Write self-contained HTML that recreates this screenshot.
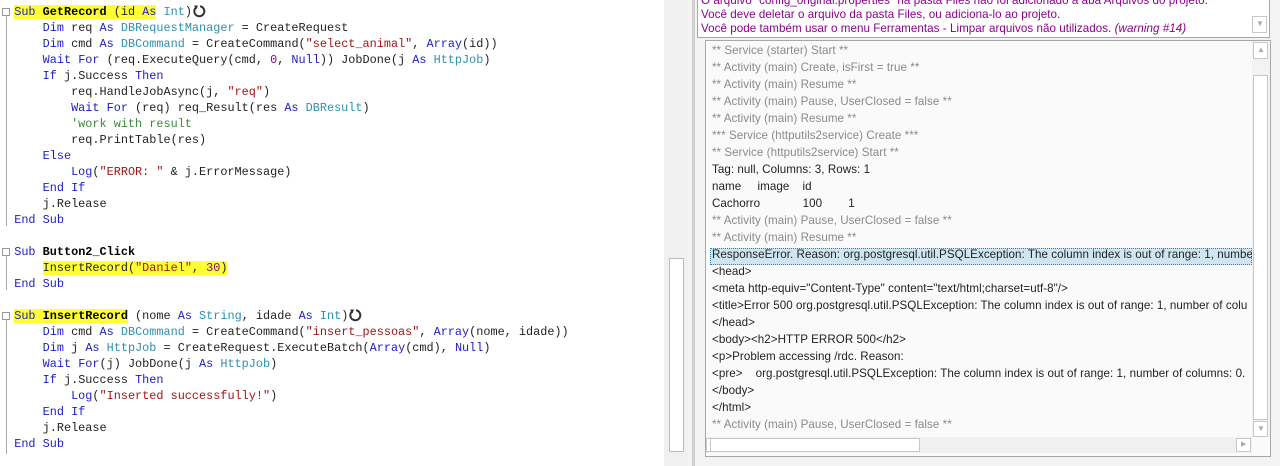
<!DOCTYPE html>
<html><head><meta charset="utf-8"><style>
*{margin:0;padding:0;box-sizing:border-box}
body{width:1280px;height:466px;overflow:hidden;background:#fff;position:relative;font-family:"Liberation Sans",sans-serif}
.code{position:absolute;left:0;top:4px;font-family:"Liberation Mono",monospace;font-size:11.85px;line-height:16px;color:#222}
.code div{height:16px;position:relative;white-space:pre}
.k{color:#1c1cc8}.t{color:#2b91af}.s{color:#a31515}.c{color:#3a8a3a}.n{color:#8b008b}.b{font-weight:bold;color:#000}
.hl{background:#ffff33}
.fold{position:absolute;left:2px;width:8px;height:8px;border:1px solid #999;background:#fff}
.vl{position:absolute;left:6px;border-left:1px solid #aaa}
.ic{display:inline-block;vertical-align:-3px}
.sb{position:absolute;background:#f0f0f0}
.log{position:absolute;left:712px;top:42px;font-size:11.6px;letter-spacing:0.05px;line-height:17px;white-space:pre;color:#222}
.g{color:#8a8a8a}
.arr{position:absolute;border:1px solid #c8c8c8;background:#fff}
</style></head><body>
<div class="sb" style="left:664px;top:0;width:24px;height:466px"></div>
<div style="position:absolute;left:669px;top:258px;width:15px;height:194px;background:#fff;border:1px solid #bbb"></div>
<div style="position:absolute;left:688px;top:0;width:592px;height:466px;background:#f3f3f3"></div>
<div style="position:absolute;left:692px;top:0;width:3px;height:466px;background:#d0d0d0"></div>
<div style="position:absolute;left:697px;top:0;width:573px;height:38px;background:#fff;border:1px solid #a8a8a8;border-top:none;overflow:hidden">
<div style="position:absolute;left:3px;top:-6px;font-size:11.6px;letter-spacing:0.05px;line-height:14px;color:#8b008b;white-space:pre">O arquivo "config_original.properties" na pasta Files não foi adicionado à aba Arquivos do projeto.
Você deve deletar o arquivo da pasta Files, ou adiciona-lo ao projeto.
Você pode também usar o menu Ferramentas - Limpar arquivos não utilizados. <i>(warning #14)</i></div>
<div class="arr" style="left:554px;top:16px;width:15px;height:17px"><span style="position:absolute;left:3px;top:2px;font-size:8px;color:#aaa">▼</span></div>
</div>
<div style="position:absolute;left:705px;top:40px;width:566px;height:417px;background:#fafafa;border:1px solid #a8a8a8"></div>
<div style="position:absolute;left:710px;top:248px;width:542px;height:17px;background:#cfe6f2;border:1px dotted #3a7ca8"></div>
<div class="log"><span class="g">** Service (starter) Start **
** Activity (main) Create, isFirst = true **
** Activity (main) Resume **
** Activity (main) Pause, UserClosed = false **
** Activity (main) Resume **
*** Service (httputils2service) Create ***
** Service (httputils2service) Start **</span>
Tag: null, Columns: 3, Rows: 1
name     image    id
Cachorro             100        1
<span class="g">** Activity (main) Pause, UserClosed = false **
** Activity (main) Resume **</span>
ResponseError. Reason: org.postgresql.util.PSQLException: The column index is out of range: 1, numbe
&lt;head&gt;
&lt;meta http-equiv="Content-Type" content="text/html;charset=utf-8"/&gt;
&lt;title&gt;Error 500 org.postgresql.util.PSQLException: The column index is out of range: 1, number of colu
&lt;/head&gt;
&lt;body&gt;&lt;h2&gt;HTTP ERROR 500&lt;/h2&gt;
&lt;p&gt;Problem accessing /rdc. Reason:
&lt;pre&gt;    org.postgresql.util.PSQLException: The column index is out of range: 1, number of columns: 0.
&lt;/body&gt;
&lt;/html&gt;
<span class="g">** Activity (main) Pause, UserClosed = false **</span></div>
<div style="position:absolute;left:1252px;top:41px;width:18px;height:396px;background:#f3f3f3"></div>
<div class="arr" style="left:1253px;top:42px;width:15px;height:17px"><span style="position:absolute;left:3px;top:2px;font-size:8px;color:#aaa">▲</span></div>
<div class="arr" style="left:1253px;top:75px;width:15px;height:345px"></div>
<div class="arr" style="left:1253px;top:421px;width:15px;height:16px"><span style="position:absolute;left:3px;top:2px;font-size:8px;color:#aaa">▼</span></div>
<div style="position:absolute;left:706px;top:437px;width:546px;height:16px;background:#f0f0f0"></div>
<div class="arr" style="left:706px;top:438px;width:12px;height:14px"><span style="position:absolute;left:2px;top:1px;font-size:7px;color:#aaa">◀</span></div>
<div class="arr" style="left:710px;top:438px;width:210px;height:14px"></div>
<div class="arr" style="left:1236px;top:438px;width:15px;height:14px"><span style="position:absolute;left:4px;top:1px;font-size:7px;color:#aaa">▶</span></div>

<div class="vl" style="top:14px;height:212px"></div>
<div class="vl" style="top:254px;height:36px"></div>
<div class="vl" style="top:318px;height:136px"></div>
<div class="fold" style="top:8px"></div>
<div class="fold" style="top:248px"></div>
<div class="fold" style="top:312px"></div>
<div class="code"><div>  <span class="hl"><span class="k">Sub</span> <span class="b">GetRecord</span> (id <span class="k">As</span></span> <span class="t">Int</span>)<svg class="ic" width="14" height="14" viewBox="0 0 14 14"><path d="M4 3.5A5 5 0 1 0 8 2.3" fill="none" stroke="#333" stroke-width="2"/><path d="M2 1.5L6 1.5L4.5 5.5Z" fill="#333"/></svg></div><div>      <span class="k">Dim</span> req <span class="k">As</span> <span class="t">DBRequestManager</span> = CreateRequest</div><div>      <span class="k">Dim</span> cmd <span class="k">As</span> <span class="t">DBCommand</span> = CreateCommand(<span class="s">"select_animal"</span>, <span class="k">Array</span>(id))</div><div>      <span class="k">Wait For</span> (req.ExecuteQuery(cmd, <span class="n">0</span>, <span class="k">Null</span>)) JobDone(j <span class="k">As</span> <span class="t">HttpJob</span>)</div><div>      <span class="k">If</span> j.Success <span class="k">Then</span></div><div>          req.HandleJobAsync(j, <span class="s">"req"</span>)</div><div>          <span class="k">Wait For</span> (req) req_Result(res <span class="k">As</span> <span class="t">DBResult</span>)</div><div>          <span class="c">'work with result</span></div><div>          req.PrintTable(res)</div><div>      <span class="k">Else</span></div><div>          <span class="k">Log</span>(<span class="s">"ERROR: "</span> &amp; j.ErrorMessage)</div><div>      <span class="k">End If</span></div><div>      j.Release</div><div>  <span class="k">End Sub</span></div><div> </div><div>  <span class="k">Sub</span> <span class="b">Button2_Click</span></div><div>      <span class="hl">InsertRecord(<span class="s">"Daniel"</span>, <span class="n">30</span>)</span></div><div>  <span class="k">End Sub</span></div><div> </div><div>  <span class="hl"><span class="k">Sub</span> <span class="b">InsertRecord</span></span> (nome <span class="k">As</span> <span class="t">String</span>, idade <span class="k">As</span> <span class="t">Int</span>)<svg class="ic" width="14" height="14" viewBox="0 0 14 14"><path d="M4 3.5A5 5 0 1 0 8 2.3" fill="none" stroke="#333" stroke-width="2"/><path d="M2 1.5L6 1.5L4.5 5.5Z" fill="#333"/></svg></div><div>      <span class="k">Dim</span> cmd <span class="k">As</span> <span class="t">DBCommand</span> = CreateCommand(<span class="s">"insert_pessoas"</span>, <span class="k">Array</span>(nome, idade))</div><div>      <span class="k">Dim</span> j <span class="k">As</span> <span class="t">HttpJob</span> = CreateRequest.ExecuteBatch(<span class="k">Array</span>(cmd), <span class="k">Null</span>)</div><div>      <span class="k">Wait For</span>(j) JobDone(j <span class="k">As</span> <span class="t">HttpJob</span>)</div><div>      <span class="k">If</span> j.Success <span class="k">Then</span></div><div>          <span class="k">Log</span>(<span class="s">"Inserted successfully!"</span>)</div><div>      <span class="k">End If</span></div><div>      j.Release</div><div>  <span class="k">End Sub</span></div></div>
</body></html>
